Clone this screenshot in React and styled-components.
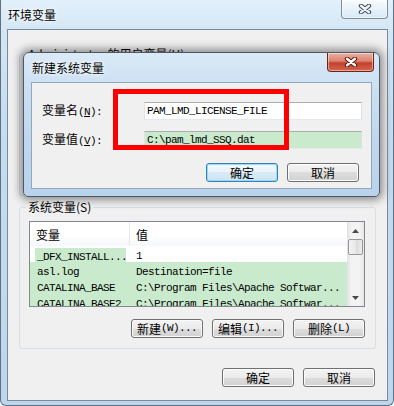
import React from 'react';
import styled, { createGlobalStyle } from 'styled-components';

const GlobalStyle = createGlobalStyle`
  html, body { margin: 0; padding: 0; background: #fff; }
  body {
    font-family: "Noto Sans CJK SC", "Liberation Sans", sans-serif;
    font-size: 12px;
    color: #000;
  }
`;

const Screen = styled.div`
  position: relative;
  width: 394px;
  height: 406px;
  overflow: hidden;
`;

const Window = styled.div`
  width: 394px;
  height: 406px;
  box-sizing: border-box;
  display: flex;
  flex-direction: column;
  padding: 0 5px 4px 6px;
  border: 1px solid #5f7184;
  border-top: none;
  border-radius: 0 0 6px 6px;
  background: linear-gradient(180deg, #e2f0fa 0%, #d3e6f5 8%, #c6dcef 30%, #bed6ec 100%);
`;

const TitleBar = styled.div`
  height: 29px;
  flex: none;
  display: flex;
  justify-content: space-between;
`;

const Title = styled.div`
  align-self: center;
  padding-left: ${p => p.$indent || 1}px;
  font-size: 12px;
  line-height: 14px;
  text-shadow: 0 0 6px #fff, 0 0 3px #fff;
`;

const CloseButton = styled.div`
  width: 47px;
  height: 19px;
  box-sizing: border-box;
  margin-right: ${p => p.$shift || 0}px;
  display: flex;
  align-items: center;
  justify-content: center;
  border: 1px solid ${p => (p.$red ? '#6b2418' : '#7e8d9e')};
  border-top: none;
  border-radius: 0 0 4px 4px;
  background: ${p =>
    p.$red
      ? 'linear-gradient(180deg, #eab0a2 0%, #db826f 45%, #c4412b 55%, #d3644e 100%)'
      : 'linear-gradient(180deg, rgba(255,255,255,0.75) 0%, rgba(240,247,252,0.5) 50%, rgba(215,230,242,0.4) 100%)'};
  box-shadow: inset 0 0 0 1px rgba(255, 255, 255, 0.45);
`;

const Client = styled.div`
  flex: 1;
  box-sizing: border-box;
  display: flex;
  flex-direction: column;
  border: 1px solid #7b8a9a;
  background: #f0f0f0;
  padding: 18px 11px 13px 11px;
`;

const Group = styled.fieldset`
  margin: ${p => p.$gap || 0}px 0 0 0;
  min-inline-size: 0;
  padding: 8px 10px 10px 9px;
  border: 1px solid #d5dfe5;
  border-radius: 3px;
`;

const GroupLabel = styled.legend`
  padding: 0 2px;
  margin-left: -3px;
  font-size: 12px;
  line-height: 12px;
`;

const ListBox = styled.div`
  height: 86px;
  box-sizing: border-box;
  display: flex;
  border: 1px solid #828790;
  background: #fff;
  overflow: hidden;
`;

const ListBody = styled.div`
  flex: 1;
  min-width: 0;
`;

const HeaderRow = styled.div`
  display: grid;
  grid-template-columns: 100px 1fr;
  height: 24px;
  background: linear-gradient(180deg, #ffffff 0%, #ffffff 55%, #f6f7f9 100%);
`;

const HeaderCell = styled.div`
  display: flex;
  align-items: center;
  padding-left: 6px;
  border-right: ${p => (p.$first ? '1px solid #e3e6ea' : 'none')};
  font-size: 12px;
`;

const Row = styled.div`
  display: grid;
  grid-template-columns: 100px 1fr;
  height: 16px;
  line-height: 16px;
  background: ${p => (p.$mark === 'row' ? '#c9eacc' : 'transparent')};
  white-space: nowrap;
`;

const Cell = styled.div`
  overflow: hidden;
  padding-left: ${p => (p.$mark ? 2 : p.$second ? 6 : 7)}px;
  margin: ${p => (p.$mark ? '2px 4px 0 5px' : '0')};
  background: ${p => (p.$mark ? '#c9eacc' : 'transparent')};
  line-height: ${p => (p.$mark ? 14 : 16)}px;
`;

const Mono = styled.span`
  font-family: "Liberation Mono", "DejaVu Sans Mono", monospace;
  font-size: 11px;
  letter-spacing: -0.6px;
`;

const ScrollBar = styled.div`
  width: 17px;
  flex: none;
  display: flex;
  flex-direction: column;
  background: linear-gradient(90deg, #e2e2e2 0%, #f3f3f3 25%, #f3f3f3 75%, #e6e6e6 100%);
`;

const ScrollArrow = styled.div`
  height: 17px;
  flex: none;
  display: flex;
  align-items: center;
  justify-content: center;
`;

const Thumb = styled.div`
  height: 16px;
  flex: none;
  box-sizing: border-box;
  margin: 0 1px;
  border: 1px solid #979797;
  border-radius: 2px;
  background: linear-gradient(90deg, #f4f4f4 0%, #e8e8e8 50%, #dadada 50%, #ececec 100%);
`;

const Track = styled.div`
  flex: 1;
`;

const ButtonRow = styled.div`
  display: flex;
  justify-content: flex-end;
  gap: ${p => p.$gap || 9}px;
  margin-top: ${p => (p.$auto ? 'auto' : `${p.$top || 0}px`)};
  margin-right: ${p => p.$right || 0}px;
`;

const Button = styled.div`
  width: 72px;
  height: 19px;
  box-sizing: border-box;
  display: flex;
  align-items: center;
  justify-content: center;
  font-size: 12px;
  line-height: 17px;
  border: 1px solid ${p => (p.$default ? '#3c7fb1' : '#707070')};
  border-radius: 3px;
  background: ${p =>
    p.$default
      ? 'linear-gradient(180deg, #f4fafd 0%, #e7f2f9 50%, #d8eaf6 50%, #cfe4f3 100%)'
      : 'linear-gradient(180deg, #f3f3f3 0%, #ebebeb 50%, #dddddd 50%, #d2d2d2 100%)'};
  box-shadow: inset 0 0 0 1px ${p => (p.$default ? '#8fdcf7' : '#fbfbfb')};
`;

const Dialog = styled.div`
  position: absolute;
  left: 23px;
  top: 52px;
  width: 357px;
  height: 145px;
  box-sizing: border-box;
  display: flex;
  flex-direction: column;
  padding: 0 7px 7px 7px;
  border: 1px solid #4c5866;
  border-radius: 6px 6px 5px 5px;
  background: linear-gradient(180deg, #dbeaf7 0%, #cde1f3 20%, #bfd7ee 60%, #b9d3ec 100%);
  box-shadow: 0 0 9px 3px rgba(0, 0, 0, 0.42);
`;

const DialogClient = styled.div`
  position: relative;
  flex: 1;
  box-sizing: border-box;
  border: 1px solid #93a6bb;
  background: #f0f0f0;
  padding: 18px 9px 0 10px;
`;

const Form = styled.div`
  display: grid;
  grid-template-columns: 102px 1fr;
  row-gap: 9px;
  align-items: center;
`;

const FieldLabel = styled.div`
  font-size: 12px;
  line-height: 18px;
`;

const Input = styled.div`
  height: 18px;
  box-sizing: border-box;
  padding-left: 2px;
  display: flex;
  align-items: center;
  border: 1px solid;
  border-color: #abadb3 #dbdfe6 #e3e9ef #e2e3ea;
  background: ${p => (p.$mark ? '#c9eacc' : '#fff')};
`;

const Marker = styled.div`
  position: absolute;
  left: 81px;
  top: 6px;
  width: 176px;
  height: 61px;
  box-sizing: border-box;
  border: 5px solid #ff0000;
  pointer-events: none;
`;

const CloseGlyph = ({ red }) => (
  <svg width="14" height="10" viewBox="0 0 14 10">
    <path d="M3 1.8 L11 8.2 M11 1.8 L3 8.2" stroke={red ? '#5a1a10' : '#3c4a58'} strokeWidth="4.4" strokeLinecap="round" fill="none" />
    <path d="M3 1.8 L11 8.2 M11 1.8 L3 8.2" stroke={red ? '#ffffff' : '#eef3f7'} strokeWidth="2.4" strokeLinecap="round" fill="none" />
  </svg>
);

const Arrow = ({ down }) => (
  <svg width="7" height="4" viewBox="0 0 7 4">
    <path d={down ? 'M0 0 L7 0 L3.5 4 Z' : 'M0 4 L7 4 L3.5 0 Z'} fill="#4a4a4a" />
  </svg>
);

const VarList = ({ rows }) => (
  <ListBox>
    <ListBody>
      <HeaderRow>
        <HeaderCell $first>变量</HeaderCell>
        <HeaderCell>值</HeaderCell>
      </HeaderRow>
      {rows.map(r => (
        <Row key={r.name} $mark={r.mark}>
          <Cell $mark={r.mark === 'cell'}><Mono>{r.name}</Mono></Cell>
          <Cell $second><Mono>{r.value}</Mono></Cell>
        </Row>
      ))}
    </ListBody>
    <ScrollBar>
      <ScrollArrow><Arrow /></ScrollArrow>
      <Thumb />
      <Track />
      <ScrollArrow><Arrow down /></ScrollArrow>
    </ScrollBar>
  </ListBox>
);

const userRows = [
  { name: 'TEMP', value: '%USERPROFILE%\\AppData\\Local\\Temp' },
  { name: 'TMP', value: '%USERPROFILE%\\AppData\\Local\\Temp' },
];

const systemRows = [
  { name: '_DFX_INSTALL...', value: '1', mark: 'cell' },
  { name: 'asl.log', value: 'Destination=file', mark: 'row' },
  { name: 'CATALINA_BASE', value: 'C:\\Program Files\\Apache Softwar...', mark: 'row' },
  { name: 'CATALINA_BASE2', value: 'C:\\Program Files\\Apache Softwar...', mark: 'row' },
];

const App = () => {
  return (
    <Screen>
      <GlobalStyle />
      <Window>
        <TitleBar>
          <Title>环境变量</Title>
          <CloseButton><CloseGlyph /></CloseButton>
        </TitleBar>
        <Client>
          <Group>
            <GroupLabel>Administrator 的用户变量(U)</GroupLabel>
            <VarList rows={userRows} />
            <ButtonRow $top={12}>
              <Button>新建<Mono>(N)...</Mono></Button>
              <Button>编辑<Mono>(E)...</Mono></Button>
              <Button>删除<Mono>(D)</Mono></Button>
            </ButtonRow>
          </Group>
          <Group $gap={5}>
            <GroupLabel>系统变量(S)</GroupLabel>
            <VarList rows={systemRows} />
            <ButtonRow $top={12}>
              <Button>新建<Mono>(W)...</Mono></Button>
              <Button>编辑<Mono>(I)...</Mono></Button>
              <Button>删除<Mono>(L)</Mono></Button>
            </ButtonRow>
          </Group>
          <ButtonRow $auto $right={1}>
            <Button>确定</Button>
            <Button>取消</Button>
          </ButtonRow>
        </Client>
      </Window>

      <Dialog>
        <TitleBar>
          <Title>新建系统变量</Title>
          <CloseButton $red $shift={-2}><CloseGlyph red /></CloseButton>
        </TitleBar>
        <DialogClient>
          <Form>
            <FieldLabel>变量名<Mono>(<u>N</u>):</Mono></FieldLabel>
            <Input><Mono>PAM_LMD_LICENSE_FILE</Mono></Input>
            <FieldLabel>变量值<Mono>(<u>V</u>):</Mono></FieldLabel>
            <Input $mark><Mono>C:\pam_lmd_SSQ.dat</Mono></Input>
          </Form>
          <ButtonRow $top={13} $right={3}>
            <Button $default>确定</Button>
            <Button>取消</Button>
          </ButtonRow>
          <Marker />
        </DialogClient>
      </Dialog>
    </Screen>
  );
};

export default App;
